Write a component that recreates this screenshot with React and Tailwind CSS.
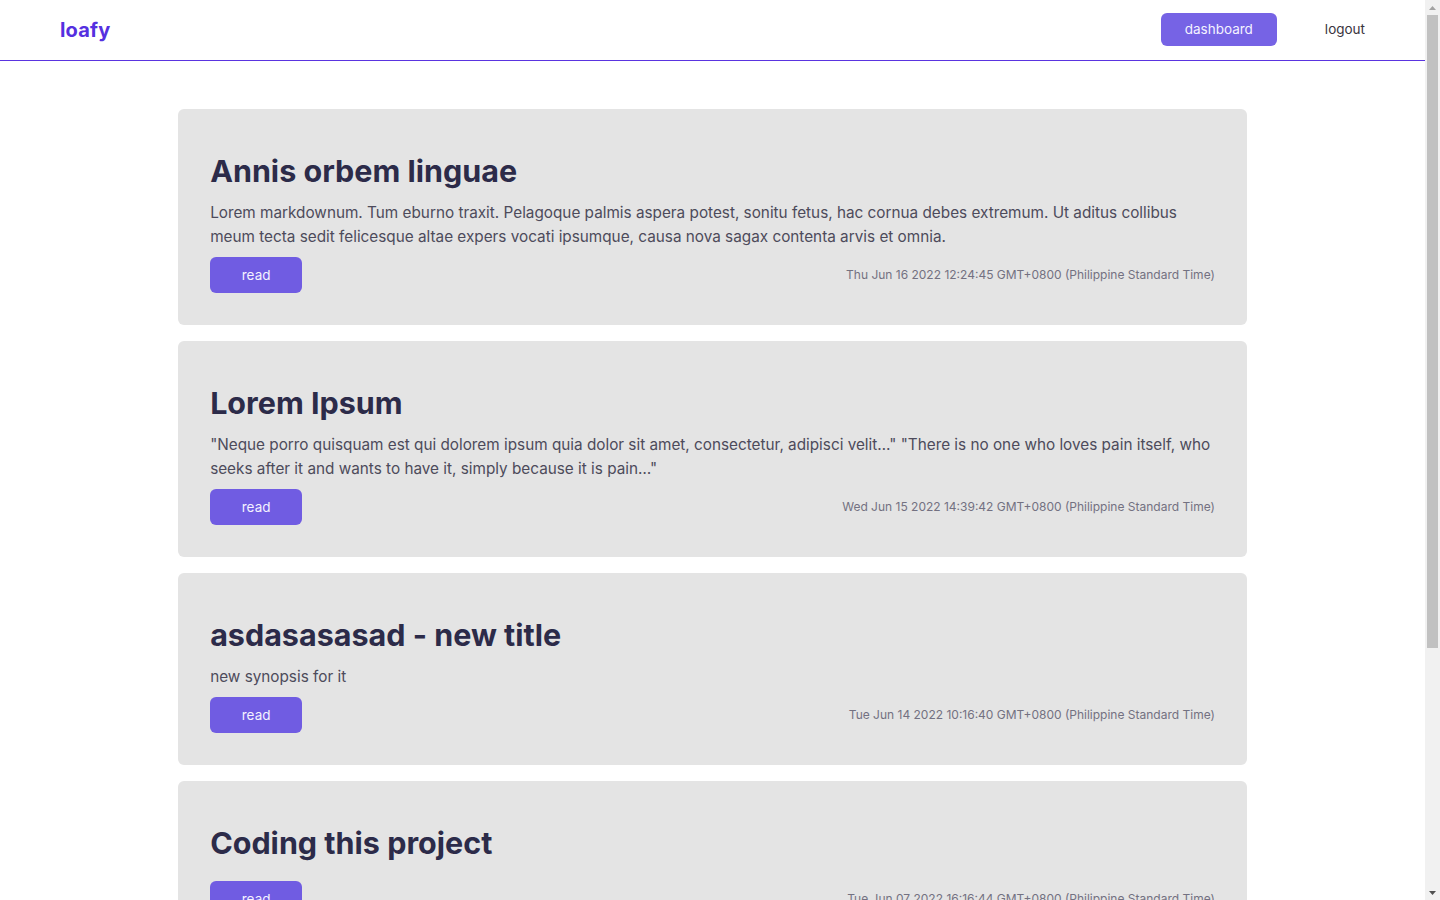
import React from "react";

const posts = [
  {
    id: 1,
    title: "Annis orbem linguae",
    synopsis:
      "Lorem markdownum. Tum eburno traxit. Pelagoque palmis aspera potest, sonitu fetus, hac cornua debes extremum. Ut aditus collibus meum tecta sedit felicesque altae expers vocati ipsumque, causa nova sagax contenta arvis et omnia.",
    date: "Thu Jun 16 2022 12:24:45 GMT+0800 (Philippine Standard Time)",
  },
  {
    id: 2,
    title: "Lorem Ipsum",
    synopsis:
      "\"Neque porro quisquam est qui dolorem ipsum quia dolor sit amet, consectetur, adipisci velit…\" \"There is no one who loves pain itself, who seeks after it and wants to have it, simply because it is pain…\"",
    date: "Wed Jun 15 2022 14:39:42 GMT+0800 (Philippine Standard Time)",
  },
  {
    id: 3,
    title: "asdasasasad - new title",
    synopsis: "new synopsis for it",
    date: "Tue Jun 14 2022 10:16:40 GMT+0800 (Philippine Standard Time)",
  },
  {
    id: 4,
    title: "Coding this project",
    synopsis: "",
    date: "Tue Jun 07 2022 16:16:44 GMT+0800 (Philippine Standard Time)",
  },
];

const Navbar = () => (
  <nav className="h-[61px] flex items-center justify-between px-[60px] border-b border-[#5a34e0] bg-white">
    <span className="text-[20px] font-bold text-[#5530e0] tracking-[0.2px]">loafy</span>
    <div className="flex items-center -mt-px">
      <button className="h-[33px] px-6 rounded-md bg-[#7663e5] text-[13.5px] text-[#f4f2ff]">
        dashboard
      </button>
      <button className="ml-12 text-[13.5px] text-[#3a3540]">logout</button>
    </div>
  </nav>
);

const PostCard = ({ post }) => (
  <div className="flex flex-col bg-[#e4e4e4] rounded-md px-8 pt-8 pb-8 mb-4">
    <h2 className="mt-3 mb-3 text-[30.5px] leading-9 font-bold text-[#2c2b49]">{post.title}</h2>
    {post.synopsis && (
      <p className="text-[15.3px] leading-6 text-[#4d4b5b]">{post.synopsis}</p>
    )}
    <div className="mt-2 flex items-center justify-between">
      <button className="w-[92px] h-9 rounded-md bg-[#705ce2] text-[13.5px] text-[#f4f2ff]">
        read
      </button>
      <span className="text-[12px] text-[#737181]">{post.date}</span>
    </div>
  </div>
);

const Scrollbar = () => (
  <aside className="w-[15px] shrink-0 h-full flex flex-col bg-[#f1f1f1]">
    <div className="h-[15px] flex items-center justify-center">
      <svg width="7" height="4" viewBox="0 0 7 4">
        <polygon points="3.5,0 7,4 0,4" fill="#a3a3a3" />
      </svg>
    </div>
    <div className="mx-[2px] h-[633px] bg-[#c1c1c1]" />
    <div className="flex-1" />
    <div className="h-[15px] flex items-center justify-center">
      <svg width="7" height="4" viewBox="0 0 7 4">
        <polygon points="0,0 7,0 3.5,4" fill="#505050" />
      </svg>
    </div>
  </aside>
);

export default function App() {
  return (
    <div className="h-screen flex overflow-hidden bg-white font-['Inter',sans-serif]">
      <div className="flex-1 min-w-0 overflow-hidden">
        <Navbar />
        <main className="w-3/4 mx-auto pt-12 pb-12">
          {posts.map((post) => (
            <PostCard key={post.id} post={post} />
          ))}
        </main>
      </div>
      <Scrollbar />
    </div>
  );
}
